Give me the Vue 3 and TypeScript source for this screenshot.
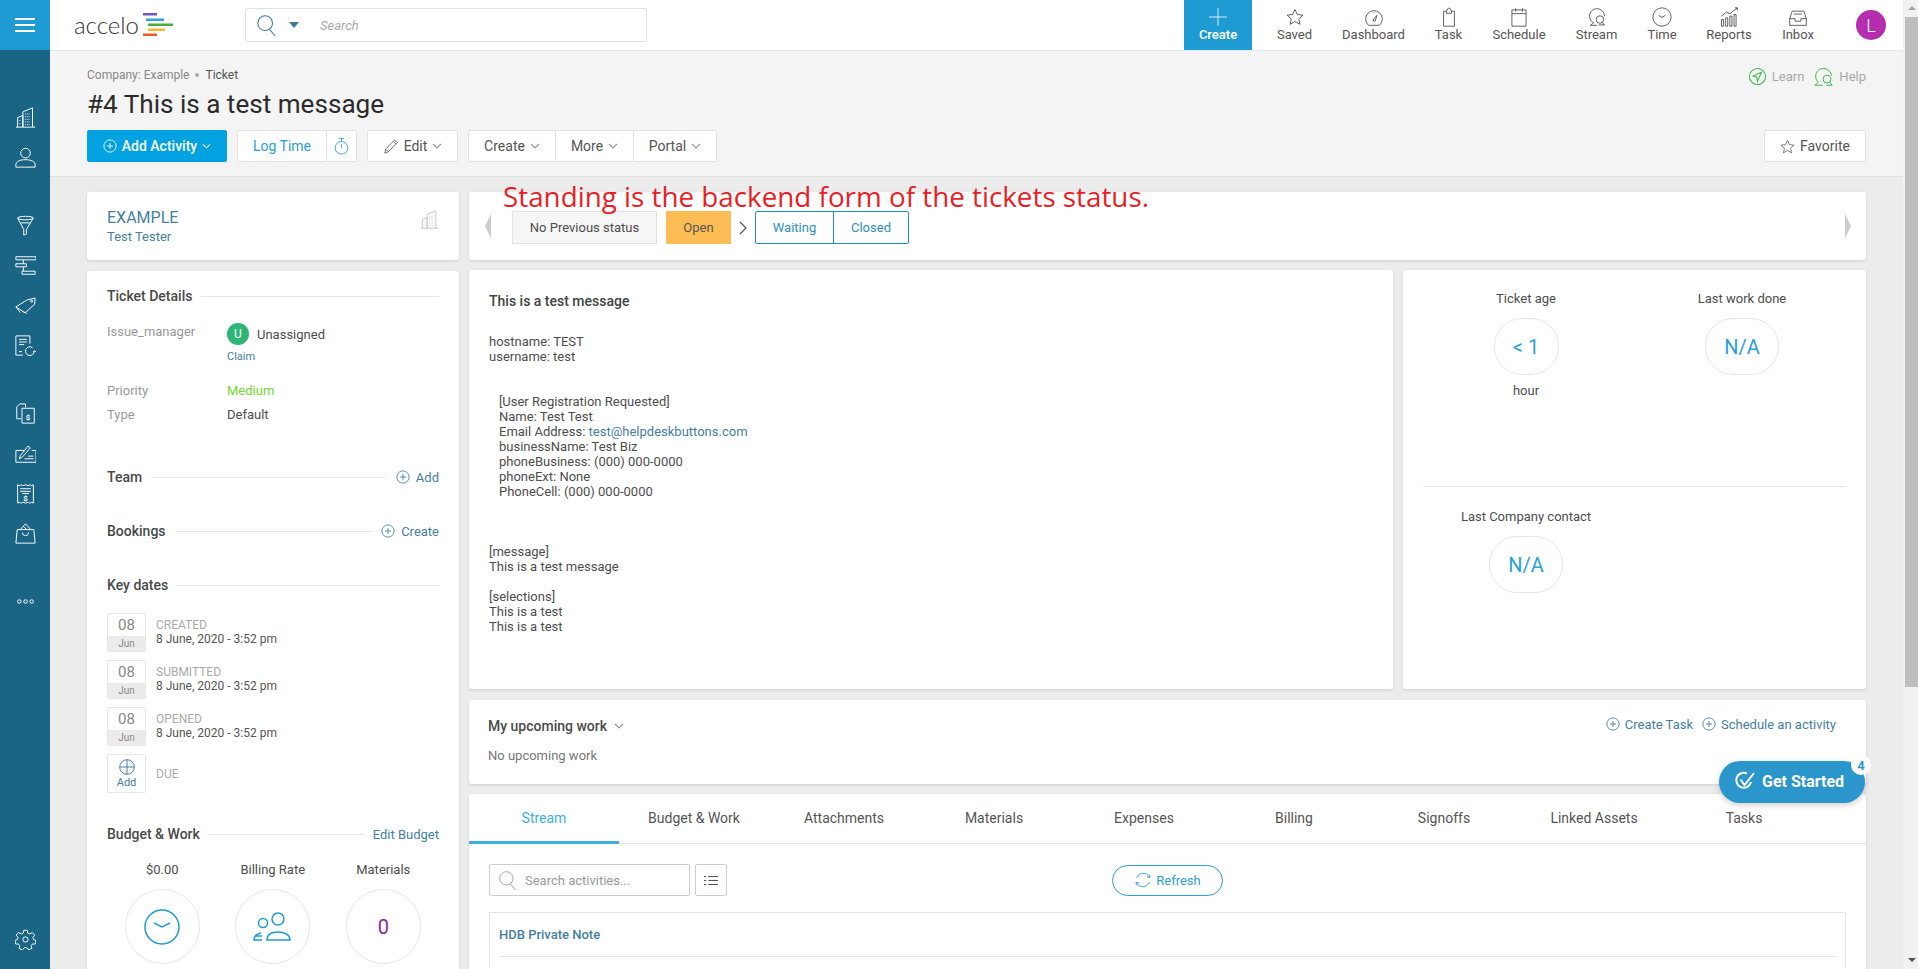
<script setup lang="ts">
const sideGroups = [
  ['building', 'person'],
  ['funnel', 'gantt', 'tag', 'docsync'],
  ['invoice', 'cheque', 'receipt', 'bag'],
  ['dots'],
]

const navItems = [
  { label: 'Saved', icon: 'star', width: 79 },
  { label: 'Dashboard', icon: 'gauge', width: 79 },
  { label: 'Task', icon: 'clip', width: 71 },
  { label: 'Schedule', icon: 'cal', width: 70 },
  { label: 'Stream', icon: 'chat', width: 85 },
  { label: 'Time', icon: 'clock', width: 46 },
  { label: 'Reports', icon: 'chart', width: 88 },
  { label: 'Inbox', icon: 'inbox', width: 50 },
]

const keyDates = [
  { label: 'CREATED', when: '8 June, 2020 - 3:52 pm' },
  { label: 'SUBMITTED', when: '8 June, 2020 - 3:52 pm' },
  { label: 'OPENED', when: '8 June, 2020 - 3:52 pm' },
]

const tabs = ['Stream', 'Budget & Work', 'Attachments', 'Materials', 'Expenses', 'Billing', 'Signoffs', 'Linked Assets', 'Tasks']

// message text, one row per line; indented rows belong to the registration block
const messageLines = [
  { text: 'hostname: TEST' },
  { text: 'username: test' },
  { text: '' },
  { text: '' },
  { text: '[User Registration Requested]', indent: true },
  { text: 'Name: Test Test', indent: true },
  { text: 'Email Address: ', indent: true, link: 'test@helpdeskbuttons.com' },
  { text: 'businessName: Test Biz', indent: true },
  { text: 'phoneBusiness: (000) 000-0000', indent: true },
  { text: 'phoneExt: None', indent: true },
  { text: 'PhoneCell: (000) 000-0000', indent: true },
  { text: '' },
  { text: '' },
  { text: '' },
  { text: '[message]' },
  { text: 'This is a test message' },
  { text: '' },
  { text: '[selections]' },
  { text: 'This is a test' },
  { text: 'This is a test' },
]
</script>

<template>
  <div class="page">
    <aside class="sidebar">
      <button type="button" class="burger" aria-label="Menu">
        <span></span><span></span><span></span>
      </button>
      <div class="side-groups">
        <div v-for="(group, i) in sideGroups" :key="i" class="side-group">
          <div v-for="name in group" :key="name" class="side-icon">
            <svg viewBox="0 0 24 24" class="si">
              <template v-if="name === 'building'">
                <path d="M1 23h22M3 23V12l6-2.500V23M9 23V5.500L20 1v22" />
                <path d="M5.500 15v1.500M5.500 18.500V20M11.500 8h6M11.500 11h6M11.500 14h6M11.500 17h6M11.500 20h6" stroke-dasharray="1 1" />
              </template>
              <template v-else-if="name === 'person'">
                <circle cx="12" cy="7" r="5.500" />
                <path d="M1 23v-2.500c0-4 4.500-6 11-6s11 2 11 6V23z" />
              </template>
              <template v-else-if="name === 'funnel'">
                <ellipse cx="12" cy="3.500" rx="9" ry="2" />
                <path d="M3 3.500l7 13V23l3-1v-5.500l8-13M7 9h10" />
              </template>
              <template v-else-if="name === 'gantt'">
                <path d="M1 2h23v3.500H1zM1 10h12v3.500H1zM8 18.500h15V22H8zM9.500 5.500V10M9.500 13.500v5" />
              </template>
              <template v-else-if="name === 'tag'">
                <path d="M1 13.500L14 5.500l9-2-.5 7-11 10z" />
                <path d="M6 20l-5-6.500M13.500 21l-4-2" />
                <circle cx="19" cy="7" r="1.200" />
              </template>
              <template v-else-if="name === 'docsync'">
                <path d="M17 10V1H1v22h8" />
                <path d="M4.500 5h9M4.500 8h9M4.500 11h6M4.500 19h3.500" />
                <path d="M22 18.500a5 5 0 1 1-2-4" />
                <path d="M20.500 19.500l2-1.500 1.500 1.500" />
              </template>
              <template v-else-if="name === 'invoice'">
                <path d="M12 5V1H5.500L2 4.500V18h5" />
                <path d="M8 6h14v17H8z" />
                <text x="15" y="19" class="si-dollar">$</text>
              </template>
              <template v-else-if="name === 'cheque'">
                <path d="M11 8.500H1V22h23V8.500h-5" />
                <path d="M5 18l1-3.500 9-11 2.500 2-9 10.500zM11 18h10M15 15h6" />
              </template>
              <template v-else-if="name === 'receipt'">
                <path d="M3 2l2 1 2-1 2 1 3-1 3 1 2-1 2 1 2-1v21l-2-1-2 1-2-1-3 1-3-1-2 1-2-1-2 1z" />
                <path d="M6 6.500h12M6 9.500h12M8 12h8" />
                <text x="12" y="20" class="si-dollar">$</text>
              </template>
              <template v-else-if="name === 'bag'">
                <path d="M2.500 7.500h19L23 23H1zM6 7.500L12 1l6 6.500M9.500 4l4 3.500" />
                <path d="M8.500 11a3.500 3.500 0 0 0 7 0" />
              </template>
              <template v-else>
                <circle cx="5" cy="12" r="2" />
                <circle cx="12" cy="12" r="2" />
                <circle cx="19" cy="12" r="2" />
              </template>
            </svg>
          </div>
        </div>
      </div>
      <div class="side-icon side-gear">
        <svg viewBox="0 0 24 24" class="si">
          <circle cx="12" cy="12" r="3" />
          <path d="M10 1.500h4l.7 3.200 2.300 1 2.800-1.700 2.700 3-2 2.500.6 2.500 2.900 1.200-.9 4-3.100-.1-1.600 2 .8 3.100-3.700 1.700-1.800-2.600h-2.600L8.400 23.900l-3.700-1.700.8-3.100-1.600-2-3.100.1-.9-4 2.900-1.200.6-2.500-2-2.500 2.700-3L7 5.700l2.300-1z" />
        </svg>
      </div>
    </aside>

    <div class="main">
      <header class="topbar">
        <div class="logo">
          <span class="logo-word">accelo</span>
          <svg viewBox="0 0 31 24" width="31" height="24" class="logo-bars">
            <rect x="0" y="1" width="14" height="2.500" fill="#7354c4" />
            <rect x="3" y="6.500" width="18" height="2.500" fill="#2ea4dc" />
            <rect x="5" y="11.500" width="25" height="2.500" fill="#47ae3e" />
            <rect x="5" y="16.500" width="17" height="2.500" fill="#fbb632" />
            <rect x="0" y="21.500" width="14" height="2.500" fill="#f2571c" />
          </svg>
        </div>
        <div class="search">
          <svg viewBox="0 0 24 24" width="22" height="24" class="search-icon">
            <circle cx="10" cy="10" r="8" />
            <path d="M15 17l6 7" />
          </svg>
          <span class="search-caret"></span>
          <span class="search-text">Search</span>
        </div>
        <button type="button" class="create-top">
          <svg viewBox="0 0 20 20" width="20" height="20">
            <path d="M10 1v18M1 10h18" />
          </svg>
          Create
        </button>
        <nav class="nav">
          <a v-for="item in navItems" :key="item.label" class="nav-item" :style="{ width: item.width + 'px' }">
            <svg viewBox="0 0 24 24" width="20" height="20" class="nav-icon">
              <path v-if="item.icon === 'star'" d="M12 3l2.800 6 6.700.8-5 4.400 1.400 6.600-5.900-3.400-5.900 3.400 1.400-6.600-5-4.400 6.700-.8z" />
              <template v-else-if="item.icon === 'gauge'">
                <path d="M5.500 22a10 10 0 1 1 13 0z" />
                <path d="M10.500 16l5-6-2 7zM12 6v1" />
              </template>
              <template v-else-if="item.icon === 'clip'">
                <path d="M9 5H5.500v18h13V5H15M9 5l2-3.500h2L15 5v2.500H9z" />
              </template>
              <template v-else-if="item.icon === 'cal'">
                <path d="M3.500 3.500h17V23h-17zM3.500 8h17M8 1.500v4M16 1.500v4" />
              </template>
              <template v-else-if="item.icon === 'chat'">
                <path d="M8 19A9 9 0 1 1 21 11" />
                <path d="M8 19l-4 3h8" />
                <circle cx="15.500" cy="15" r="4.500" />
                <path d="M18.500 18.500l2.500 3h-7" />
              </template>
              <template v-else-if="item.icon === 'clock'">
                <circle cx="12" cy="12" r="11" />
                <path d="M8 10l4 2.500L16 10" />
              </template>
              <template v-else-if="item.icon === 'chart'">
                <path d="M3 15h2.500v8H3zM8 13h2.500v10H8zM13 11h2.500v12H13zM18 9h2.500v14H18zM3 11l6-5 4 2 9-7M19 1h3v3" />
              </template>
              <template v-else>
                <path d="M5 5h14l3 9v8H2v-8zM2 14h6.500v3h7v-3H22" />
                <path d="M7 8.500h10" />
              </template>
            </svg>
            <span>{{ item.label }}</span>
          </a>
        </nav>
        <span class="avatar">L</span>
      </header>

      <section class="head">
        <div class="head-top">
          <div class="crumbs">
            <span>Company: Example</span><i></i><b>Ticket</b>
          </div>
          <div class="guides">
            <svg viewBox="0 0 20 20" width="19" height="19">
              <circle cx="10" cy="10" r="8.500" />
              <path d="M14 5.500l-8.500 4 3.500 1 1 4.500z" />
            </svg>
            <span>Learn</span>
            <svg viewBox="0 0 24 24" width="21" height="21">
              <path d="M6 18.500A9 9 0 1 1 21 11" />
              <path d="M6 18.500L2 22h9" />
              <circle cx="16" cy="15" r="4.500" />
              <path d="M19 18.500l3 3.500h-7" />
            </svg>
            <span>Help</span>
          </div>
        </div>
        <h1 class="title">#4 This is a test message</h1>
        <div class="actions">
          <button type="button" class="btn btn-primary">
            <svg viewBox="0 0 16 16" width="14" height="14" class="plus">
              <circle cx="8" cy="8" r="7" />
              <path d="M8 4.500v7M4.500 8h7" />
            </svg>
            Add Activity
            <svg viewBox="0 0 10 6" width="9" height="6" class="chev"><path d="M1 1l4 4 4-4" /></svg>
          </button>
          <div class="btn-group">
            <button type="button" class="btn btn-log">Log Time</button>
            <button type="button" class="btn btn-timer">
              <svg viewBox="0 0 16 20" width="15" height="18">
                <circle cx="8" cy="12" r="7" />
                <path d="M5 1.500h6M8 1.500V5M8 8v4" />
              </svg>
            </button>
          </div>
          <button type="button" class="btn btn-edit">
            <svg viewBox="0 0 18 18" width="16" height="17" class="pencil">
              <path d="M2 16.500l1-4.500L13 1.500l3 3L6 15zM3 12l3 3M11.500 3l3 3" />
            </svg>
            Edit
            <svg viewBox="0 0 10 6" width="10" height="6" class="chev gray"><path d="M1 1l4 4 4-4" /></svg>
          </button>
          <div class="btn-group">
            <button v-for="b in ['Create', 'More', 'Portal']" :key="b" type="button" class="btn" :class="'w-' + b">
              {{ b }}
              <svg viewBox="0 0 10 6" width="10" height="6" class="chev gray"><path d="M1 1l4 4 4-4" /></svg>
            </button>
          </div>
          <button type="button" class="btn btn-fav">
            <svg viewBox="0 0 24 24" width="15" height="15" class="star">
              <path d="M12 2l3 7 7.500.8-5.600 5 1.600 7.400L12 18.400l-6.500 3.800 1.600-7.400-5.600-5L9 9z" />
            </svg>
            Favorite
          </button>
        </div>
      </section>

      <div class="content">
        <div class="col-left">
          <div class="card company">
            <div>
              <div class="company-name">EXAMPLE</div>
              <div class="company-person">Test Tester</div>
            </div>
            <svg viewBox="0 0 24 24" width="19" height="21" class="company-icon">
              <path d="M1 23h22M3 23V12l6-2.500V23M9 23V5.500L20 1v22" />
              <path d="M5.500 15v1.500M5.500 18.500V20M11.500 8h6M11.500 11h6M11.500 14h6M11.500 17h6M11.500 20h6" stroke-dasharray="1 1" />
            </svg>
          </div>

          <div class="card details">
            <div class="sec first"><span>Ticket Details</span><i></i></div>
            <div class="field manager">
              <span class="field-label">Issue_manager</span>
              <div>
                <div class="assignee"><span class="u-badge">U</span><span>Unassigned</span></div>
                <a class="claim">Claim</a>
              </div>
            </div>
            <div class="field priority">
              <span class="field-label">Priority</span><span class="medium">Medium</span>
            </div>
            <div class="field type">
              <span class="field-label">Type</span><span>Default</span>
            </div>

            <div class="sec team">
              <span>Team</span><i></i>
              <a class="sec-link">
                <svg viewBox="0 0 16 16" width="14" height="14" class="link-plus"><circle cx="8" cy="8" r="7" /><path d="M8 4.500v7M4.500 8h7" /></svg>
                Add
              </a>
            </div>
            <div class="sec bookings">
              <span>Bookings</span><i></i>
              <a class="sec-link">
                <svg viewBox="0 0 16 16" width="14" height="14" class="link-plus"><circle cx="8" cy="8" r="7" /><path d="M8 4.500v7M4.500 8h7" /></svg>
                Create
              </a>
            </div>
            <div class="sec keydates"><span>Key dates</span><i></i></div>

            <div class="dates">
              <div v-for="d in keyDates" :key="d.label" class="date-row">
                <div class="date-box">
                  <span class="date-day">08</span>
                  <span class="date-month">Jun</span>
                </div>
                <div class="date-info">
                  <span class="date-label">{{ d.label }}</span>
                  <span class="date-when">{{ d.when }}</span>
                </div>
              </div>
              <div class="date-row due">
                <div class="date-box add">
                  <svg viewBox="0 0 16 16" width="16" height="16" class="link-plus"><circle cx="8" cy="8" r="7.300" /><path d="M8 1v14M1 8h14" /></svg>
                  <span>Add</span>
                </div>
                <span class="date-label">DUE</span>
              </div>
            </div>

            <div class="sec budget">
              <span>Budget &amp; Work</span><i></i>
              <a class="sec-link">Edit Budget</a>
            </div>
            <div class="budget-row">
              <div class="budget-item">
                <span>$0.00</span>
                <div class="budget-circle">
                  <svg viewBox="0 0 36 36" width="36" height="36" class="blue-icon">
                    <circle cx="18" cy="18" r="17" />
                    <path d="M10 14l8 4 8-4" />
                  </svg>
                </div>
              </div>
              <div class="budget-item">
                <span>Billing Rate</span>
                <div class="budget-circle">
                  <svg viewBox="0 0 40 30" width="40" height="30" class="blue-icon">
                    <circle cx="25" cy="7" r="6" />
                    <circle cx="10" cy="11" r="4.500" />
                    <path d="M14 28c0-5 4-8 11-8s12 3 12 8zM9 28H1c0-4 2-6 7-7M3 24h6" />
                  </svg>
                </div>
              </div>
              <div class="budget-item">
                <span>Materials</span>
                <div class="budget-circle purple">0</div>
              </div>
            </div>
          </div>
        </div>

        <div class="col-right">
          <div class="card status">
            <svg viewBox="0 0 6 24" width="6" height="24" class="status-arrow"><path d="M6 0v24L0 12z" /></svg>
            <span class="st st-none">No Previous status</span>
            <span class="st st-open">Open</span>
            <svg viewBox="0 0 8 14" width="8" height="14" class="st-chev"><path d="M1 1l6 6-6 6" /></svg>
            <div class="st-next">
              <span class="st-link">Waiting</span>
              <span class="st-link">Closed</span>
            </div>
            <svg viewBox="0 0 6 24" width="6" height="24" class="status-arrow right"><path d="M0 0v24l6-12z" /></svg>
            <div class="annotation">Standing is the backend form of the tickets status.</div>
          </div>

          <div class="mid">
            <div class="card message">
              <h2>This is a test message</h2>
              <div class="body">
                <div v-for="(line, i) in messageLines" :key="i" class="body-line" :class="{ indent: line.indent }">
                  <span>{{ line.text }}</span><a v-if="line.link">{{ line.link }}</a>
                </div>
              </div>
            </div>
            <div class="card stats">
              <div class="stat-row top">
                <div class="stat age">
                  <span>Ticket age</span>
                  <div class="blob narrow">&lt; 1</div>
                  <span>hour</span>
                </div>
                <div class="stat">
                  <span>Last work done</span>
                  <div class="blob">N/A</div>
                </div>
              </div>
              <div class="stat-row">
                <div class="stat">
                  <span>Last Company contact</span>
                  <div class="blob">N/A</div>
                </div>
              </div>
            </div>
          </div>

          <div class="card upcoming">
            <div class="up-left">
              <div class="up-title">
                My upcoming work
                <svg viewBox="0 0 10 6" width="10" height="6" class="chev gray"><path d="M1 1l4 4 4-4" /></svg>
              </div>
              <div class="up-none">No upcoming work</div>
            </div>
            <div class="up-links">
              <a>
                <svg viewBox="0 0 16 16" width="14" height="14" class="link-plus"><circle cx="8" cy="8" r="7" /><path d="M8 4.500v7M4.500 8h7" /></svg>
                Create Task
              </a>
              <a>
                <svg viewBox="0 0 16 16" width="14" height="14" class="link-plus"><circle cx="8" cy="8" r="7" /><path d="M8 4.500v7M4.500 8h7" /></svg>
                Schedule an activity
              </a>
            </div>
          </div>

          <div class="card activity">
            <div class="tabs">
              <span v-for="(t, i) in tabs" :key="t" class="tab" :class="{ active: i === 0 }">{{ t }}</span>
            </div>
            <div class="tools">
              <div class="act-search">
                <svg viewBox="0 0 24 24" width="20" height="22" class="act-mag"><circle cx="10" cy="10" r="8" /><path d="M15 17l6 7" /></svg>
                <span>Search activities...</span>
              </div>
              <button type="button" class="list-btn" aria-label="List">
                <svg viewBox="0 0 16 12" width="14" height="11"><path d="M5 1.500h11M5 6h11M5 10.500h11M0 1.500h2.500M0 6h2.500M0 10.500h2.500" /></svg>
              </button>
              <button type="button" class="refresh">
                <svg viewBox="0 0 20 20" width="18" height="18">
                  <path d="M3 8a7.500 7.500 0 0 1 14-1M17 12a7.500 7.500 0 0 1-14 1" />
                  <path d="M14.500 7H18l-1-3M5.500 13H2l1 3" />
                </svg>
                Refresh
              </button>
            </div>
            <div class="note">
              <div class="note-title">HDB Private Note</div>
              <div class="note-line"></div>
            </div>
          </div>
        </div>
      </div>

      <div class="get-started">
        <svg viewBox="0 0 22 22" width="22" height="22">
          <path d="M17 12a7.500 7.500 0 1 1-4-8.500" />
          <path d="M6.500 9.500l4 5.500L20 3" />
        </svg>
        Get Started
        <span class="gs-badge">4</span>
      </div>
    </div>

    <div class="scrollbar">
      <span class="sb-up"></span>
      <span class="sb-thumb"></span>
      <span class="sb-down"></span>
    </div>
  </div>
</template>

<style>
html,
body {
  margin: 0;
  overflow: hidden;
}
</style>

<style scoped>
* {
  box-sizing: border-box;
}
a {
  color: #457fa1;
  cursor: pointer;
}
svg {
  fill: none;
  flex-shrink: 0;
}
button {
  font-family: inherit;
}
.page {
  display: flex;
  height: 969px;
  overflow: hidden;
  position: relative;
  font-family: Roboto, "Liberation Sans", sans-serif;
  font-size: 13px;
  color: #4d4d4d;
  background: #ececec;
}

/* left rail */
.sidebar {
  display: flex;
  flex-direction: column;
  flex: 0 0 50px;
  background: #1a6485;
}
.burger {
  display: flex;
  flex-direction: column;
  justify-content: center;
  gap: 4px;
  height: 50px;
  padding: 0 15px;
  background: #1f9bd4;
  border: none;
}
.burger span {
  height: 2px;
  background: #fff;
}
.side-groups {
  display: flex;
  flex-direction: column;
  gap: 28px;
  padding-top: 47px;
}
.side-icon {
  display: flex;
  align-items: center;
  justify-content: center;
  height: 40px;
}
.si {
  width: 21px;
  height: 21px;
  stroke: #fff;
  stroke-width: 1.100;
}
.si-dollar {
  font-size: 9px;
  font-weight: 700;
  text-anchor: middle;
  fill: #fff;
  stroke: none;
}
.side-gear {
  margin-top: auto;
  margin-bottom: 10px;
}

/* top bar */
.main {
  display: flex;
  flex-direction: column;
  flex: 1;
  min-width: 0;
}
.topbar {
  display: flex;
  align-items: center;
  flex: 0 0 51px;
  background: #fff;
  border-bottom: 1px solid #e3e9f1;
}
.logo {
  display: flex;
  align-items: center;
  gap: 4px;
  width: 195px;
  padding-left: 24px;
}
.logo-word {
  font-family: Lato, Roboto, sans-serif;
  font-size: 24px;
  font-weight: 300;
  color: #333;
  line-height: 1;
}
.logo-bars {
  margin-top: -2px;
}
.search {
  display: flex;
  align-items: center;
  width: 402px;
  height: 34px;
  padding-left: 10px;
  background: #fff;
  border: 1px solid #dfe3e6;
  border-radius: 2px;
}
.search-icon {
  stroke: #3f7a9b;
  stroke-width: 1.100;
}
.search-caret {
  margin-left: 11px;
  border: 5px solid transparent;
  border-top: 6px solid #3f7a9b;
  border-bottom: none;
}
.search-text {
  margin-left: 21px;
  font-size: 13px;
  font-style: italic;
  color: #aaa;
}
.create-top {
  display: flex;
  flex-direction: column;
  align-items: center;
  justify-content: flex-end;
  width: 68px;
  height: 50px;
  margin-left: 537px;
  padding: 0 0 8px;
  font-size: 13px;
  font-weight: 500;
  color: #fff;
  background: #1f9bd4;
  border: none;
}
.create-top svg {
  stroke: #fff;
  stroke-width: 0.800;
}
.nav {
  display: flex;
  height: 50px;
  margin-left: 3px;
}
.nav-item {
  display: flex;
  flex-direction: column;
  align-items: center;
  justify-content: flex-end;
  gap: 1px;
  padding-bottom: 8px;
  font-size: 13px;
  color: #555;
  white-space: nowrap;
}
.nav-item span {
  line-height: 14px;
}
.nav-icon {
  stroke: #444;
  stroke-width: 1;
}
.avatar {
  display: flex;
  align-items: center;
  justify-content: center;
  width: 30px;
  height: 30px;
  margin-left: 33px;
  font-size: 18px;
  font-weight: 300;
  color: #fff;
  background: #b52eaf;
  border-radius: 50%;
}

/* page head */
.head {
  flex: 0 0 126px;
  padding: 17px 37px 0 37px;
  background: #f4f4f4;
  border-bottom: 1px solid #e2e2e2;
}
.head-top {
  display: flex;
  justify-content: space-between;
  height: 14px;
}
.crumbs {
  display: flex;
  align-items: center;
  font-size: 12px;
  color: #888;
}
.crumbs i {
  width: 4px;
  height: 4px;
  margin: 0 6px;
  background: #aaa;
  border-radius: 50%;
}
.crumbs b {
  font-weight: 400;
  color: #555;
}
.guides {
  display: flex;
  align-items: center;
  gap: 5px;
  height: 20px;
  margin-top: -2px;
  font-size: 13px;
  color: #a8a8a8;
}
.guides svg {
  stroke: #3cb64a;
  stroke-width: 1.100;
}
.guides span:first-of-type {
  margin-right: 4px;
}
.title {
  margin: 5px 0 0;
  font-size: 26.100px;
  font-weight: 400;
  line-height: 34px;
  color: #2b2b2b;
}
.actions {
  display: flex;
  gap: 10px;
  margin-top: 9px;
}
.btn {
  display: inline-flex;
  align-items: center;
  justify-content: center;
  gap: 5px;
  height: 32px;
  padding: 0 12px;
  font-size: 14px;
  color: #555;
  background: #fff;
  border: 1px solid #e2e2e2;
  border-radius: 2px;
  white-space: nowrap;
}
.btn-primary {
  width: 140px;
  padding: 0;
  font-weight: 500;
  color: #fff;
  background: #00a2e2;
  border-color: #00a2e2;
}
.plus {
  stroke: #fff;
}
.chev {
  stroke: currentColor;
  stroke-width: 1.200;
}
.chev.gray {
  stroke: #999;
}
.btn-group {
  display: flex;
}
.btn-group .btn + .btn {
  margin-left: -1px;
}
.btn-log {
  width: 90px;
  color: #2c9fd8;
}
.btn-timer {
  width: 31px;
  padding: 0;
}
.btn-timer svg {
  stroke: #2c9fd8;
}
.btn-edit {
  width: 91px;
  padding: 0;
}
.pencil {
  stroke: #555;
  stroke-width: 0.900;
}
.w-Create {
  width: 88px;
}
.w-More {
  width: 79px;
}
.w-Portal {
  width: 84px;
}
.btn-fav {
  width: 102px;
  margin-left: auto;
}
.star {
  stroke: #555;
  stroke-width: 1.200;
}

/* two columns */
.content {
  display: flex;
  gap: 10px;
  padding: 15px 37px 0 37px;
}
.col-left {
  display: flex;
  flex-direction: column;
  gap: 11px;
  flex: 0 0 372px;
  min-width: 0;
}
.col-right {
  display: flex;
  flex-direction: column;
  flex: 1;
  min-width: 0;
}
.card {
  background: #fff;
  border-radius: 3px;
  box-shadow: 0 1px 3px rgba(0, 0, 0, 0.12);
}
.company {
  display: flex;
  justify-content: space-between;
  flex: 0 0 68px;
  padding: 16px 20px 0;
}
.company-name {
  font-size: 16px;
  line-height: 20px;
  color: #457fa1;
}
.company-person {
  margin-top: 1px;
  font-size: 13px;
  line-height: 15px;
  color: #457fa1;
}
.company-icon {
  stroke: #bbb;
  stroke-width: 1;
  margin-top: 1px;
}

/* ticket details */
.details {
  height: 720px;
  padding: 0 20px;
  font-size: 13px;
}
.sec {
  display: flex;
  align-items: center;
  gap: 9px;
  height: 20px;
  font-size: 14px;
  font-weight: 500;
  color: #4a4a4a;
}
.sec i {
  flex: 1;
  height: 1px;
  background: #e6e6e6;
}
.sec-link {
  display: flex;
  align-items: center;
  gap: 6px;
  margin-left: 1px;
  font-size: 13px;
  font-weight: 400;
  color: #457fa1;
}
.link-plus {
  stroke: #457fa1;
  stroke-width: 1;
}
.first {
  margin-top: 15px;
}
.field {
  display: flex;
}
.field-label {
  flex: 0 0 120px;
  color: #999;
}
.manager {
  margin-top: 18px;
  height: 55px;
}
.assignee {
  display: flex;
  align-items: center;
  gap: 8px;
  margin-top: -1px;
}
.u-badge {
  display: flex;
  align-items: center;
  justify-content: center;
  width: 22px;
  height: 22px;
  font-size: 12px;
  color: #fff;
  background: #2fb574;
  border-radius: 50%;
}
.claim {
  display: block;
  margin-top: 5px;
  font-size: 11px;
}
.priority {
  margin-top: 4px;
  line-height: 16px;
}
.medium {
  color: #74d62f;
}
.type {
  margin-top: 8px;
  line-height: 16px;
}
.team {
  margin-top: 44px;
}
.bookings {
  margin-top: 34px;
}
.keydates {
  margin-top: 34px;
}
.dates {
  display: flex;
  flex-direction: column;
  gap: 8px;
  margin-top: 18px;
}
.date-row {
  display: flex;
  align-items: center;
  gap: 10px;
}
.date-box {
  display: flex;
  flex-direction: column;
  align-items: center;
  width: 39px;
  height: 39px;
  background: #fff;
  border: 1px solid #e6e6e6;
  border-radius: 2px;
  overflow: hidden;
}
.date-day {
  flex: 0 0 22px;
  font-size: 15px;
  line-height: 22px;
  color: #888;
}
.date-month {
  flex: 1;
  width: 100%;
  font-size: 10px;
  line-height: 15px;
  text-align: center;
  color: #888;
  background: #ebebeb;
}
.date-info {
  display: flex;
  flex-direction: column;
  margin-top: -1px;
}
.date-label {
  font-size: 12px;
  line-height: 14px;
  color: #aaa;
}
.date-when {
  font-size: 12px;
  line-height: 14px;
  color: #555;
}
.add {
  justify-content: center;
  gap: 1px;
  font-size: 11px;
  color: #457fa1;
}
.budget {
  margin-top: 31px;
}
.budget-row {
  display: flex;
  margin-top: 19px;
}
.budget-item {
  display: flex;
  flex-direction: column;
  align-items: center;
  gap: 12px;
  width: 110.500px;
  font-size: 13px;
  line-height: 14px;
}
.budget-circle {
  display: flex;
  align-items: center;
  justify-content: center;
  width: 75px;
  height: 75px;
  border: 1px solid #e6e6e6;
  border-radius: 50%;
}
.blue-icon {
  stroke: #1f9bd4;
  stroke-width: 1.500;
}
.purple {
  font-size: 20px;
  color: #8e24aa;
}

/* status card */
.status {
  display: flex;
  align-items: center;
  flex: 0 0 68px;
  position: relative;
  padding: 0 15px 0 16px;
}
.status-arrow {
  fill: #ccc;
}
.status-arrow.right {
  margin-left: auto;
}
.st {
  display: flex;
  align-items: center;
  justify-content: center;
  height: 33px;
  margin-top: 3px;
}
.st-none {
  width: 145px;
  margin-left: 21px;
  background: #f6f6f6;
  border: 1px solid #e2e2e2;
}
.st-open {
  width: 65px;
  margin-left: 9px;
  color: #555;
  background: #fdbd54;
  border-radius: 1px;
}
.st-chev {
  margin: 3px 8px 0 8px;
  stroke: #555;
  stroke-width: 1.200;
}
.st-next {
  display: flex;
  height: 33px;
  margin-top: 3px;
  border: 1px solid #1f8fc6;
  border-radius: 2px;
}
.st-link {
  display: flex;
  align-items: center;
  justify-content: center;
  width: 77px;
  color: #2c8ec2;
}
.st-link + .st-link {
  width: 75px;
  border-left: 1px solid #1f8fc6;
}
.annotation {
  position: absolute;
  left: 34px;
  top: -13px;
  font-family: "Open Sans", sans-serif;
  font-size: 27.800px;
  line-height: 34px;
  color: #ed1c24;
  white-space: nowrap;
}

/* message + stats */
.mid {
  display: flex;
  gap: 10px;
  margin-top: 10px;
  height: 419px;
}
.message {
  flex: 0 0 924px;
  padding: 23px 20px;
}
.message h2 {
  margin: 0;
  font-size: 14px;
  font-weight: 500;
  line-height: 16px;
  color: #444;
}
.body {
  margin-top: 25px;
  font-size: 13px;
  color: #4d4d4d;
}
.body-line {
  min-height: 15px;
  line-height: 15px;
  white-space: pre;
}
.indent {
  padding-left: 10px;
}
.stats {
  flex: 1;
  min-width: 0;
  padding: 0 20px;
}
.stat-row {
  display: flex;
}
.stat-row.top {
  height: 217px;
  padding-top: 21px;
  border-bottom: 1px solid #e6e6e6;
}
.stat-row:not(.top) {
  padding-top: 22px;
}
.stat {
  display: flex;
  flex-direction: column;
  align-items: center;
  flex: 0 0 216px;
  font-size: 13px;
  line-height: 16px;
}
.stat:first-child {
  margin-left: -5px;
}
.blob {
  display: flex;
  align-items: center;
  justify-content: center;
  width: 74px;
  height: 57px;
  margin: 11px 0 8px;
  font-size: 20px;
  color: #2c9fd8;
  border: 1px solid #e6e6e6;
  border-radius: 28px;
}
.blob.narrow {
  width: 65px;
}

/* upcoming */
.upcoming {
  display: flex;
  justify-content: space-between;
  flex: 0 0 84px;
  margin-top: 11px;
  padding: 17px 30px 0 19px;
}
.up-left {
  padding-top: 1px;
}
.up-title {
  display: flex;
  align-items: center;
  gap: 7px;
  height: 16px;
  font-size: 14px;
  font-weight: 500;
  color: #4a4a4a;
}
.up-none {
  margin-top: 14px;
  font-size: 13px;
  color: #777;
}
.up-links {
  display: flex;
  gap: 9px;
  font-size: 13px;
}
.up-links a {
  display: flex;
  align-items: center;
  gap: 5px;
  height: 14px;
}

/* activity tabs */
.activity {
  height: 300px;
  margin-top: 10px;
}
.tabs {
  display: flex;
  height: 50px;
  border-bottom: 1px solid #e6e6e6;
}
.tab {
  display: flex;
  align-items: center;
  justify-content: center;
  width: 150px;
  height: 50px;
  padding-bottom: 3px;
  font-size: 14px;
  color: #555;
}
.tab.active {
  color: #3bb0e5;
  border-bottom: 3px solid #3bb0e5;
  padding-bottom: 0;
}
.tools {
  display: flex;
  align-items: center;
  gap: 5px;
  margin-top: 20px;
  padding: 0 20px;
}
.act-search {
  display: flex;
  align-items: center;
  gap: 7px;
  width: 201px;
  height: 32px;
  padding-left: 8px;
  font-size: 13px;
  color: #999;
  border: 1px solid #ccc;
  border-radius: 2px;
}
.act-mag {
  stroke: #999;
  stroke-width: 1;
}
.list-btn {
  display: flex;
  align-items: center;
  justify-content: center;
  width: 32px;
  height: 32px;
  padding: 0;
  background: #fff;
  border: 1px solid #ccc;
  border-radius: 2px;
}
.list-btn svg {
  stroke: #555;
  stroke-width: 1.200;
}
.refresh {
  display: flex;
  align-items: center;
  justify-content: center;
  gap: 4px;
  width: 111px;
  height: 31px;
  margin-left: 380px;
  font-size: 13px;
  color: #2c9fd8;
  background: #fff;
  border: 1px solid #2c9fd8;
  border-radius: 16px;
}
.refresh svg {
  stroke: #2c9fd8;
}
.note {
  height: 120px;
  margin: 16px 20px 0;
  padding: 14px 9px 0;
  border: 1px solid #e6e6e6;
}
.note-title {
  font-size: 13px;
  font-weight: 500;
  line-height: 16px;
  color: #457fa1;
}
.note-line {
  height: 1px;
  margin-top: 13px;
  background: #e6e6e6;
}

/* floating button */
.get-started {
  display: flex;
  align-items: center;
  gap: 6px;
  position: absolute;
  left: 1719px;
  top: 761px;
  width: 146px;
  height: 42px;
  padding: 0 0 2px 15px;
  font-size: 16px;
  font-weight: 700;
  color: #fff;
  background: #2b96cc;
  border-radius: 21px;
  box-shadow: 0 2px 6px rgba(0, 0, 0, 0.2);
}
.get-started svg {
  stroke: #fff;
  stroke-width: 2;
}
.gs-badge {
  display: flex;
  align-items: center;
  justify-content: center;
  position: absolute;
  right: -6px;
  top: -6px;
  width: 20px;
  height: 20px;
  font-size: 13px;
  color: #2b96cc;
  background: #fff;
  border-radius: 50%;
}

/* window scrollbar */
.scrollbar {
  display: flex;
  flex-direction: column;
  flex: 0 0 15px;
  background: #f1f1f1;
}
.sb-up,
.sb-down {
  flex: 0 0 17px;
  position: relative;
}
.sb-up::after,
.sb-down::after {
  content: "";
  position: absolute;
  left: 5px;
  top: 6px;
  border: 4px solid transparent;
}
.sb-up::after {
  border-bottom: 4px solid #a3a3a3;
  border-top: none;
}
.sb-down::after {
  border-top: 4px solid #505050;
  border-bottom: none;
}
.sb-thumb {
  flex: 0 0 670px;
  margin-left: 2px;
  background: #bebebe;
}
.sb-down {
  margin-top: auto;
}
</style>
